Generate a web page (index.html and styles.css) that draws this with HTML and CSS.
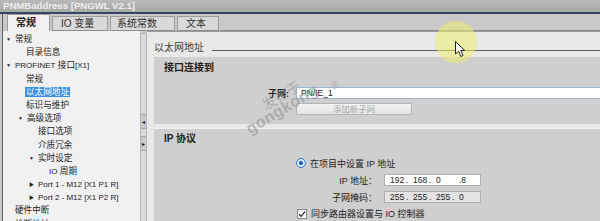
FILE: index.html
```html
<!DOCTYPE html>
<html lang="zh">
<head>
<meta charset="utf-8">
<title>PNMBaddress</title>
<link rel="stylesheet" href="styles.css">
</head>
<body>
<div class="window">
  <div class="titlebar">PNMBaddress [PNGWL V2.1]</div>
  <div class="frame">
    <div class="tabbar">
      <div class="tab active t1">常规</div>
      <div class="tab t2">IO 变量</div>
      <div class="tab t3">系统常数</div>
      <div class="tab t4">文本</div>
      <div class="tabfill"></div>
    </div>
    <div class="body">
      <div class="tree">
        <div class="row pa"><span class="tw">▼</span>常规</div>
        <div class="row nb">目录信息</div>
        <div class="row pa"><span class="tw">▼</span><span class="lt">PROFINET</span>&nbsp;接口 <span class="lt">[X1]</span></div>
        <div class="row nb">常规</div>
        <div class="row nb"><span class="sel">以太网地址</span></div>
        <div class="row nb">标识与维护</div>
        <div class="row pb"><span class="tw">▼</span>高级选项</div>
        <div class="row nc">接口选项</div>
        <div class="row nc">介质冗余</div>
        <div class="row pc"><span class="tw">▼</span>实时设定</div>
        <div class="row nd"><span class="lt">IO</span>&nbsp;周期</div>
        <div class="row pc"><span class="tw r">▶</span><span class="lt">Port 1 - M12 [X1 P1 R]</span></div>
        <div class="row pc"><span class="tw r">▶</span><span class="lt">Port 2 - M12 [X1 P2 R]</span></div>
        <div class="row na">硬件中断</div>
        <div class="row na">诊断地址</div>
      </div>
      <div class="splitter">
        <div class="handle"><span class="arr">◂</span></div>
        <div class="handle h2"><span class="arr">▸</span></div>
      </div>
      <div class="pane">
        <div class="pane-head"><span class="ph-text">以太网地址</span><span class="rule"></span></div>
        <div class="section s1">
          <div class="sec-title">接口连接到</div>
          <div class="frow subnet">
            <span class="lbl l1">子网:</span>
            <div class="input blue">PN/IE_1</div>
          </div>
          <div class="frow btnrow">
            <div class="btn">添加新子网</div>
          </div>
        </div>
        <div class="section s2">
          <div class="sec-title">IP 协议</div>
          <div class="frow radiorow">
            <span class="radio"><span class="dot"></span></span>
            <span class="opt">在项目中设置 IP 地址</span>
          </div>
          <div class="frow iprow">
            <span class="lbl l2">IP 地址：</span>
            <div class="input ip">
              <span class="oct">192</span><span class="dt">.</span><span class="oct">168</span><span class="dt">.</span><span class="oct">0</span><span class="dt"></span><span class="oct">.8</span>
            </div>
          </div>
          <div class="frow iprow">
            <span class="lbl l2">子网掩码：</span>
            <div class="input ip dis">
              <span class="oct">255</span><span class="dt">.</span><span class="oct">255</span><span class="dt">.</span><span class="oct">255</span><span class="dt">.</span><span class="oct">0</span>
            </div>
          </div>
          <div class="frow chkrow">
            <span class="chk"><svg width="8" height="8" viewBox="0 0 8 8"><path d="M1 4.2 L3.1 6.3 L7 1.6" fill="none" stroke="#333" stroke-width="1.3"/></svg></span>
            <span class="opt">同步路由器设置与 IO 控制器</span>
          </div>
        </div>
      </div>
    </div>
  </div>
  <div class="wm wm1">发布于</div>
  <div class="wm wm2">gongkong</div>
  <div class="wm wm3">®</div>
  <div class="spot"></div>
  <svg class="cursor" width="11" height="17" viewBox="0 0 11 17"><path d="M0.5 0.5 L0.5 13 L3.5 10.2 L5.8 15.5 L8 14.5 L5.8 9.5 L9.8 9.5 Z" fill="#fff" stroke="#222" stroke-width="1"/></svg>
</div>
</body>
</html>
```
FILE: styles.css
```css
* { box-sizing: border-box; }
html, body { margin: 0; padding: 0; }
body {
  width: 600px;
  height: 221px;
  overflow: hidden;
  font-family: "Liberation Sans", "Noto Sans CJK SC", sans-serif;
  background: #c9c9c9;
}
.window {
  position: relative;
  width: 600px;
  height: 221px;
  overflow: hidden;
}
.titlebar {
  height: 14px;
  background: linear-gradient(#b9b9b9, #a9a9a9);
  border-bottom: 2px solid #37455e;
  color: #eeeeee;
  font-weight: bold;
  font-size: 9.6px;
  line-height: 12px;
  padding-left: 3px;
  white-space: nowrap;
}
.frame {
  margin-left: 2px;
  border-left: 1px solid #5e5e5e;
  height: 207px;
  display: flex;
  flex-direction: column;
}
.tabbar {
  height: 17px;
  display: flex;
  align-items: flex-end;
  padding-left: 4px;
  background: #c9c9c9;
}
.tab {
  height: 15px;
  font-size: 10px;
  line-height: 14px;
  padding-left: 8px;
  color: #303030;
  background: #d9d9d9;
  border: 1px solid #9c9c9c;
  border-bottom: 1px solid #8c8c8c;
  margin-right: 2px;
  white-space: nowrap;
}
.tab.active {
  height: 17px;
  background: #f1f1f1;
  border-bottom: none;
  font-weight: bold;
  color: #202020;
  line-height: 16px;
}
.t1 { width: 43px; }
.t2 { width: 56px; }
.t3 { width: 65px; padding-left: 6px; }
.t4 { width: 42px; }
.tabfill {
  flex: 1;
  height: 1px;
  background: #8c8c8c;
}
.body {
  flex: 1;
  display: flex;
  min-height: 0;
}
.tree {
  width: 137px;
  background: #f1f1f1;
  padding-top: 2px;
  font-size: 8.6px;
  color: #222;
  overflow: hidden;
}
.lt { font-size: 8px; }
.row {
  height: 13.2px;
  line-height: 13.2px;
  white-space: nowrap;
  display: flex;
  align-items: center;
}
.tw {
  display: inline-block;
  width: 9px;
  font-size: 5px;
  color: #222;
  line-height: 13px;
}
.pa { padding-left: 3px; }
.pb { padding-left: 15px; }
.pc { padding-left: 26px; }
.na { padding-left: 12px; }
.nb { padding-left: 23px; }
.nc { padding-left: 35px; }
.nd { padding-left: 46px; }
.sel {
  background: #3c8fe4;
  color: #fff;
  padding: 0 1px;
  margin-left: -1px;
  line-height: 10px;
  height: 10px;
}
.splitter {
  width: 7px;
  background: #d9d9d9;
  border-left: 1px solid #b4b4b4;
  border-right: 1px solid #b4b4b4;
  border-top: 1px solid #b4b4b4;
  margin-top: 2px;
  display: flex;
  flex-direction: column;
  align-items: center;
  padding-top: 80px;
}
.handle {
  width: 5px;
  height: 15px;
  background: #c9c9c9;
  border-top: 1px solid #aaa;
  border-bottom: 1px solid #aaa;
  display: flex;
  align-items: center;
  justify-content: center;
}
.h2 { margin-top: 7px; }
.arr {
  font-size: 6px;
  color: #111;
  line-height: 6px;
}
.pane {
  flex: 1;
  background: #e9e9e9;
  border-top: 1px solid #9a9a9a;
  padding-left: 7px;
  padding-top: 9px;
}
.pane-head {
  display: flex;
  align-items: center;
  height: 14px;
}
.ph-text {
  font-size: 10px;
  color: #404040;
  line-height: 14px;
}
.rule {
  flex: 1;
  height: 1px;
  background: #5a5a5a;
  margin-left: 8px;
  margin-top: 4px;
}
.section {
  background: #cfcfcf;
}
.s1 {
  height: 67px;
  padding-top: 5px;
  margin-top: 2px;
}
.s2 {
  margin-top: 4px;
  height: 100px;
  padding-top: 4px;
  border-top: 1px solid #f2f2f2;
}
.sec-title {
  font-size: 10px;
  font-weight: bold;
  color: #202020;
  line-height: 12px;
  padding-left: 10px;
}
.frow {
  display: flex;
  align-items: center;
  white-space: nowrap;
}
.lbl {
  font-size: 9px;
  color: #222;
  text-align: right;
}
.l1 { width: 137px; font-weight: bold; padding-right: 2px; }
.l2 { width: 223px; }
.subnet { margin-top: 13px; height: 12px; }
.input {
  height: 12px;
  font-size: 8.5px;
  line-height: 10px;
  color: #222;
  background: #fff;
  border: 1px solid #a8a8a8;
  padding-left: 4px;
}
.blue {
  flex: 1;
  margin-left: 5px;
  border: 1px solid #9db0cf;
  border-right: none;
}
.btnrow { margin-top: 4px; padding-left: 142px; }
.btn {
  width: 116px;
  height: 12px;
  border: 1px solid #b4b4b4;
  border-radius: 2px;
  background: linear-gradient(#f5f5f5, #e2e2e2);
  color: #a6a6a6;
  font-size: 8.5px;
  line-height: 10px;
  text-align: center;
}
.radiorow { margin-top: 12px; padding-left: 142px; height: 12px; }
.radio {
  width: 10px;
  height: 10px;
  border-radius: 50%;
  border: 1px solid #3f7fc0;
  background: radial-gradient(circle, #e8f4ff 30%, #a9d3f4 100%);
  display: flex;
  align-items: center;
  justify-content: center;
  margin-right: 4px;
}
.dot {
  width: 4px;
  height: 4px;
  border-radius: 50%;
  background: #0f4e9c;
}
.opt { font-size: 9px; color: #222; }
.iprow { margin-top: 5px; height: 12px; }
.ip {
  width: 97px;
  margin-left: 7px;
  display: flex;
  padding-left: 5px;
  border-color: #b0b0b0;
}
.ip.dis { background: #e4e4e4; }
.oct { display: inline-block; width: 16px; }
.dt { display: inline-block; width: 7px; }
.chkrow { margin-top: 5px; padding-left: 143px; height: 11px; }
.chk {
  width: 10px;
  height: 10px;
  border: 1px solid #8a8a8a;
  background: #f4f4f4;
  display: flex;
  align-items: center;
  justify-content: center;
  margin-right: 4px;
}
.wm {
  position: absolute;
  color: rgba(140, 140, 140, 0.55);
  transform-origin: left bottom;
  transform: rotate(-31deg);
  white-space: nowrap;
  pointer-events: none;
}
.wm1 { left: 268px; top: 94px; font-size: 14px; font-family: "Noto Sans CJK SC", sans-serif; }
.wm2 { left: 252px; top: 120px; font-size: 16px; font-weight: bold; font-family: "Liberation Sans", sans-serif; letter-spacing: 0.5px; }
.wm3 { left: 331px; top: 80px; font-size: 10px; transform: none; }
.spot {
  position: absolute;
  left: 435px;
  top: 21px;
  width: 42px;
  height: 42px;
  border-radius: 50%;
  background: rgba(238, 238, 110, 0.55);
}
.cursor {
  position: absolute;
  left: 455px;
  top: 41px;
}
```
